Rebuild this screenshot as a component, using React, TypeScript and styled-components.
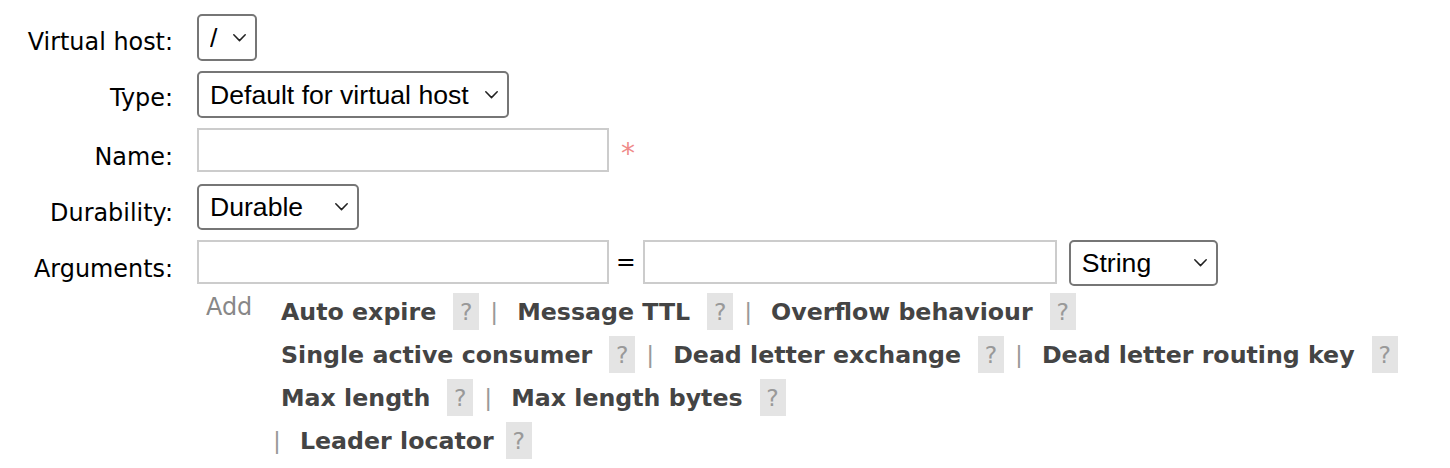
import React from "react";
import styled, { createGlobalStyle } from "styled-components";

const GlobalStyle = createGlobalStyle`
  html, body { margin: 0; padding: 0; background: #fff; }
  body {
    font-family: "DejaVu Sans", Verdana, sans-serif;
    font-size: 23.5px;
    color: #000;
  }
  * { box-sizing: border-box; }
`;

const Form = styled.form`
  display: flex;
  flex-direction: column;
  width: 1450px;
  padding-top: 14px;
`;

const Row = styled.div<{ $gap: number }>`
  display: grid;
  grid-template-columns: 173px 1fr;
  column-gap: 24px;
  margin-bottom: ${(p) => p.$gap}px;
`;

const Label = styled.label<{ $offset: number }>`
  text-align: right;
  font-size: 23.9px;
  line-height: 28px;
  padding-top: ${(p) => p.$offset}px;
  white-space: nowrap;
  color: #000;
`;

const Cell = styled.div`
  display: flex;
  flex-direction: column;
  align-items: flex-start;
`;

const Line = styled.div`
  display: flex;
  align-items: flex-start;
`;

const SelectWrap = styled.span<{ $width: number; $height: number; $ml?: number }>`
  position: relative;
  display: inline-flex;
  width: ${(p) => p.$width}px;
  height: ${(p) => p.$height}px;
  margin-left: ${(p) => p.$ml ?? 0}px;
`;

const NativeSelect = styled.select`
  appearance: none;
  -webkit-appearance: none;
  width: 100%;
  height: 100%;
  margin: 0;
  padding: 0 30px 0 11px;
  border: 2px solid #767676;
  border-radius: 5px;
  background: #fff;
  color: #000;
  font-family: "Liberation Sans", Arial, sans-serif;
  font-size: 26.6px;
  outline: none;
`;

const Chevron = styled.svg`
  position: absolute;
  right: 11px;
  top: 50%;
  margin-top: -4px;
  width: 13px;
  height: 8px;
  pointer-events: none;
  color: #222;
`;

const TextInput = styled.input<{ $width: number }>`
  width: ${(p) => p.$width}px;
  height: 44px;
  margin: 0;
  padding: 0 6px;
  border: 2px solid #ccc;
  border-radius: 0;
  background: #fff;
  font: inherit;
  outline: none;
`;

const Mandatory = styled.span`
  color: #ef8a8a;
  font-size: 28px;
  line-height: 28px;
  margin-left: 12px;
  margin-top: 12px;
`;

const Equals = styled.span`
  line-height: 44px;
  margin: 0 7px;
  color: #000;
`;

const Extras = styled.div`
  display: grid;
  grid-template-columns: 84px 1fr;
  margin-top: 4px;
`;

const AddCell = styled.span`
  padding-left: 9px;
  padding-top: 3px;
  line-height: 28px;
  font-size: 23.9px;
  color: #888;
`;

const LinkLines = styled.div`
  display: flex;
  flex-direction: column;
`;

const LinkLine = styled.div`
  display: flex;
  align-items: center;
  height: 43px;
  white-space: nowrap;
`;

const ArgLink = styled.span`
  font-weight: bold;
  color: #444;
  line-height: 28px;
  font-size: 23.7px;
  cursor: pointer;
`;

const Help = styled.span<{ $tight?: boolean }>`
  display: inline-flex;
  align-items: center;
  justify-content: center;
  width: 26px;
  height: 37px;
  margin-left: ${(p) => (p.$tight ? 12 : 17)}px;
  background: #e4e4e4;
  color: #999;
  line-height: 28px;
`;

const Sep = styled.span<{ $lead?: boolean }>`
  color: #999;
  line-height: 28px;
  margin: 0 19px 0 ${(p) => (p.$lead ? -8 : 11)}px;
`;

function Select({
  width,
  height = 47,
  ml,
  value,
  options,
}: {
  width: number;
  height?: number;
  ml?: number;
  value: string;
  options: string[];
}) {
  return (
    <SelectWrap $width={width} $height={height} $ml={ml}>
      <NativeSelect defaultValue={value}>
        {options.map((o) => (
          <option key={o} value={o}>
            {o}
          </option>
        ))}
      </NativeSelect>
      <Chevron viewBox="0 0 13 8" fill="none">
        <path d="M0.8 0.8 L6.5 6.6 L12.2 0.8" stroke="currentColor" strokeWidth="1.5" strokeLinecap="round" strokeLinejoin="round" />
      </Chevron>
    </SelectWrap>
  );
}

type Item = { name: string; sep?: boolean };

const lines: Item[][] = [
  [{ name: "Auto expire", sep: true }, { name: "Message TTL", sep: true }, { name: "Overflow behaviour" }],
  [
    { name: "Single active consumer", sep: true },
    { name: "Dead letter exchange", sep: true },
    { name: "Dead letter routing key" },
  ],
  [{ name: "Max length", sep: true }, { name: "Max length bytes" }],
];

export default function App() {
  return (
    <>
      <GlobalStyle />
      <Form onSubmit={(e) => e.preventDefault()}>
        <Row $gap={10}>
          <Label $offset={14}>Virtual host:</Label>
          <Cell>
            <Select width={60} value="/" options={["/"]} />
          </Cell>
        </Row>
        <Row $gap={10}>
          <Label $offset={13}>Type:</Label>
          <Cell>
            <Select
              width={312}
              value="Default for virtual host"
              options={["Default for virtual host", "Classic", "Quorum", "Stream"]}
            />
          </Cell>
        </Row>
        <Row $gap={12}>
          <Label $offset={15}>Name:</Label>
          <Cell>
            <Line>
              <TextInput $width={412} type="text" />
              <Mandatory>*</Mandatory>
            </Line>
          </Cell>
        </Row>
        <Row $gap={10}>
          <Label $offset={15}>Durability:</Label>
          <Cell>
            <Select width={162} height={46} value="Durable" options={["Durable", "Transient"]} />
          </Cell>
        </Row>
        <Row $gap={0}>
          <Label $offset={15}>Arguments:</Label>
          <Cell>
            <Line>
              <TextInput $width={412} type="text" />
              <Equals>=</Equals>
              <TextInput $width={414} type="text" />
              <Select width={149} height={46} ml={12} value="String" options={["String", "Number", "Boolean", "List"]} />
            </Line>
            <Extras>
              <AddCell>Add</AddCell>
              <LinkLines>
                {lines.map((line, i) => (
                  <LinkLine key={i}>
                    {line.map((it) => (
                      <React.Fragment key={it.name}>
                        <ArgLink>{it.name}</ArgLink>
                        <Help>?</Help>
                        {it.sep && <Sep>|</Sep>}
                      </React.Fragment>
                    ))}
                  </LinkLine>
                ))}
                <LinkLine>
                  <Sep $lead>|</Sep>
                  <ArgLink>Leader locator</ArgLink>
                  <Help $tight>?</Help>
                </LinkLine>
              </LinkLines>
            </Extras>
          </Cell>
        </Row>
      </Form>
    </>
  );
}
